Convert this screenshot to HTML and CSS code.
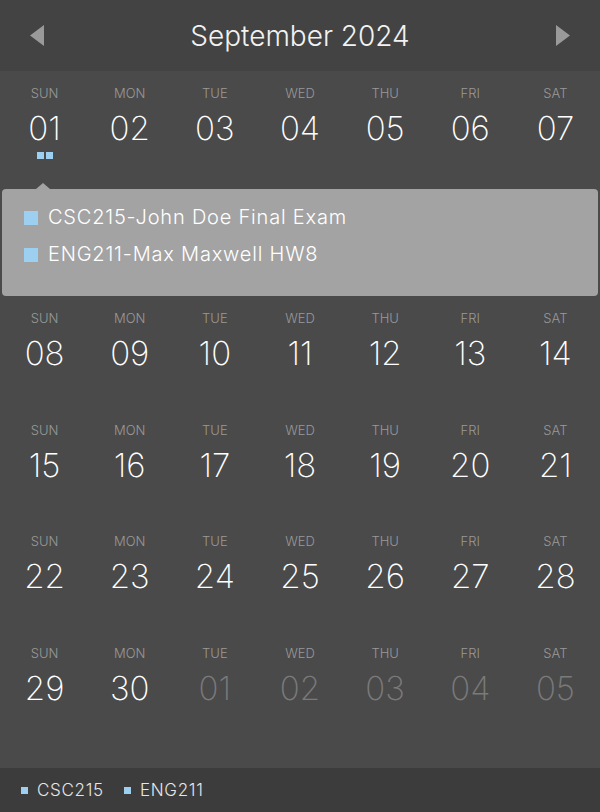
FILE: index.html
```html
<!DOCTYPE html>
<html lang="en">
<head>
<meta charset="utf-8">
<title>September 2024</title>
<link rel="stylesheet" href="styles.css">
</head>
<body>
<div class="cal">
  <header class="head">
    <button class="nav" aria-label="Previous month">
      <svg width="14" height="21" viewBox="0 0 14 21"><polygon points="14,0 14,21 0,10.5" fill="#9a9a9a"/></svg>
    </button>
    <h1 class="title">September 2024</h1>
    <button class="nav" aria-label="Next month">
      <svg width="14" height="21" viewBox="0 0 14 21"><polygon points="0,0 0,21 14,10.5" fill="#9a9a9a"/></svg>
    </button>
  </header>

  <main class="body">
    <div class="week first">
      <div class="cell"><span class="dn">SUN</span><span class="num">01</span><span class="dots"><i></i><i></i></span></div>
      <div class="cell"><span class="dn">MON</span><span class="num">02</span></div>
      <div class="cell"><span class="dn">TUE</span><span class="num">03</span></div>
      <div class="cell"><span class="dn">WED</span><span class="num">04</span></div>
      <div class="cell"><span class="dn">THU</span><span class="num">05</span></div>
      <div class="cell"><span class="dn">FRI</span><span class="num">06</span></div>
      <div class="cell"><span class="dn">SAT</span><span class="num">07</span></div>
    </div>

    <div class="popover">
      <ul class="events">
        <li><i class="sq"></i>CSC215-John Doe Final Exam</li>
        <li><i class="sq"></i>ENG211-Max Maxwell HW8</li>
      </ul>
    </div>

    <div class="week">
      <div class="cell"><span class="dn">SUN</span><span class="num">08</span></div>
      <div class="cell"><span class="dn">MON</span><span class="num">09</span></div>
      <div class="cell"><span class="dn">TUE</span><span class="num">10</span></div>
      <div class="cell"><span class="dn">WED</span><span class="num">11</span></div>
      <div class="cell"><span class="dn">THU</span><span class="num">12</span></div>
      <div class="cell"><span class="dn">FRI</span><span class="num">13</span></div>
      <div class="cell"><span class="dn">SAT</span><span class="num">14</span></div>
    </div>
    <div class="week">
      <div class="cell"><span class="dn">SUN</span><span class="num">15</span></div>
      <div class="cell"><span class="dn">MON</span><span class="num">16</span></div>
      <div class="cell"><span class="dn">TUE</span><span class="num">17</span></div>
      <div class="cell"><span class="dn">WED</span><span class="num">18</span></div>
      <div class="cell"><span class="dn">THU</span><span class="num">19</span></div>
      <div class="cell"><span class="dn">FRI</span><span class="num">20</span></div>
      <div class="cell"><span class="dn">SAT</span><span class="num">21</span></div>
    </div>
    <div class="week">
      <div class="cell"><span class="dn">SUN</span><span class="num">22</span></div>
      <div class="cell"><span class="dn">MON</span><span class="num">23</span></div>
      <div class="cell"><span class="dn">TUE</span><span class="num">24</span></div>
      <div class="cell"><span class="dn">WED</span><span class="num">25</span></div>
      <div class="cell"><span class="dn">THU</span><span class="num">26</span></div>
      <div class="cell"><span class="dn">FRI</span><span class="num">27</span></div>
      <div class="cell"><span class="dn">SAT</span><span class="num">28</span></div>
    </div>
    <div class="week">
      <div class="cell"><span class="dn">SUN</span><span class="num">29</span></div>
      <div class="cell"><span class="dn">MON</span><span class="num">30</span></div>
      <div class="cell"><span class="dn">TUE</span><span class="num muted">01</span></div>
      <div class="cell"><span class="dn">WED</span><span class="num muted">02</span></div>
      <div class="cell"><span class="dn">THU</span><span class="num muted">03</span></div>
      <div class="cell"><span class="dn">FRI</span><span class="num muted">04</span></div>
      <div class="cell"><span class="dn">SAT</span><span class="num muted">05</span></div>
    </div>
  </main>

  <footer class="legend">
    <span class="lg"><i class="dot"></i>CSC215</span>
    <span class="lg"><i class="dot"></i>ENG211</span>
  </footer>
</div>
</body>
</html>
```

FILE: styles.css
```css
* { box-sizing: border-box; }
html, body { margin: 0; padding: 0; }
body {
  background: #4a4a4a;
  font-family: Inter, Roboto, "Liberation Sans", sans-serif;
  font-weight: 300;
  color: #fff;
}
.cal {
  width: 600px;
  height: 812px;
  display: flex;
  flex-direction: column;
  background: #4a4a4a;
}
.head {
  height: 71px;
  flex: none;
  display: flex;
  align-items: center;
  justify-content: space-between;
  padding: 0 30px;
  background: #434343;
}
.nav {
  background: none;
  border: 0;
  padding: 0;
  margin: 0;
  width: 14px;
  height: 21px;
  display: flex;
}
.title {
  margin: 0;
  font-size: 28px;
  font-weight: 300;
  color: #f2f2f2;
  line-height: 36px;
}
.body {
  flex: 1;
  display: flex;
  flex-direction: column;
  padding: 0 2px;
}
.week {
  height: 111.5px;
  flex: none;
  display: grid;
  grid-template-columns: repeat(7, 1fr);
}
.week.first { height: 112px; }
.cell {
  display: flex;
  flex-direction: column;
  align-items: center;
  padding-top: 14px;
}
.dn {
  font-size: 13px;
  line-height: 16px;
  color: #999;
}
.num {
  margin-top: 9px;
  font-size: 33px;
  line-height: 36px;
  color: #fff;
  font-weight: 200;
}
.num.muted { color: #7a7a7a; }
.dots {
  margin-top: 6px;
  display: flex;
  gap: 2px;
}
.dots i {
  width: 7px;
  height: 7px;
  background: #9ccff0;
  display: block;
}
.popover {
  position: relative;
  margin-top: 6px;
  height: 107px;
  flex: none;
  background: #a3a3a3;
  border-radius: 4px;
  padding: 10px 22px 0;
}
.popover::before {
  content: "";
  position: absolute;
  top: -6px;
  left: 34px;
  border-left: 7px solid transparent;
  border-right: 7px solid transparent;
  border-bottom: 6px solid #a3a3a3;
}
.events {
  list-style: none;
  margin: 0;
  padding: 0;
}
.events li {
  display: flex;
  align-items: center;
  gap: 10px;
  font-size: 20px;
  line-height: 37px;
  letter-spacing: 0.8px;
  color: #fff;
}
.sq {
  width: 14px;
  height: 14px;
  background: #9ccff0;
  display: block;
  flex: none;
}
.legend {
  height: 44px;
  flex: none;
  background: #3c3c3c;
  display: flex;
  align-items: center;
  gap: 20px;
  padding-left: 21px;
}
.lg {
  display: flex;
  align-items: center;
  gap: 9px;
  font-size: 17px;
  letter-spacing: 0.7px;
  color: #e6e6e6;
}
.dot {
  width: 7px;
  height: 7px;
  background: #9ccff0;
  display: block;
}
```
